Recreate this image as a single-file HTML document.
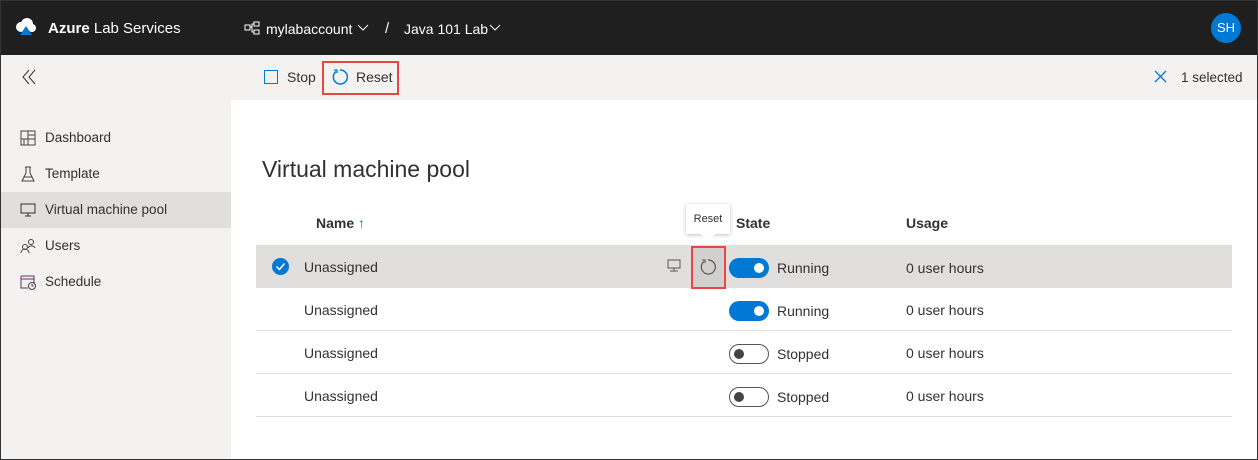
<!DOCTYPE html>
<html><head><style>
*{margin:0;padding:0;box-sizing:border-box}
body{width:1258px;height:460px;overflow:hidden;font-family:"Liberation Sans",sans-serif;background:#fff;position:relative;color:#323130}
.frame{position:absolute;inset:0;border:1px solid #333;pointer-events:none;z-index:10}
.hdr{position:absolute;left:0;top:0;width:1258px;height:55px;background:#1f1f1f;color:#fff;font-size:14px}
.tb{position:absolute;left:0;top:55px;width:1258px;height:45px;background:#f3f2f1;font-size:14px}
.side{position:absolute;left:0;top:100px;width:231px;height:360px;background:#f3f2f1;font-size:13.5px}
.nav{position:absolute;left:0;width:231px;height:36px;line-height:36px;padding-left:45px}
.nav svg{position:absolute;left:20px;top:10px}
.a{position:absolute;white-space:nowrap}
.row{position:absolute;left:256px;width:976px;height:43px;border-bottom:1px solid #e1dfdd;font-size:14px}
.row span{position:absolute;top:14px}
.tog{position:absolute;left:473px;top:13px;width:40px;height:20px;border-radius:10px}
.on{background:#0078d4}.on::after{content:"";position:absolute;right:5px;top:5px;width:10px;height:10px;border-radius:50%;background:#fff}
.off{border:1px solid #555;background:#fff}.off::after{content:"";position:absolute;left:4px;top:4px;width:10px;height:10px;border-radius:50%;background:#444}
</style></head><body>
<div class="hdr">
<svg class="a" style="left:15px;top:18px" width="22" height="18" viewBox="0 0 22 18"><circle cx="6" cy="9" r="5" fill="#fff"/><circle cx="12" cy="6" r="6" fill="#fff"/><circle cx="17" cy="10" r="4" fill="#fff"/><path d="M11 8 L17 17 H5Z" fill="#0078d4"/></svg>
<div class="a" style="left:48px;top:20px;font-size:15px"><b>Azure</b> Lab Services</div>
<svg class="a" style="left:244px;top:21px" width="16" height="14" viewBox="0 0 16 14" fill="none" stroke="#fff"><rect x="1" y="4" width="5" height="5"/><rect x="10" y="1" width="5" height="4"/><rect x="10" y="9" width="5" height="4"/><path d="M6 6h2v-3h2M8 6v5h2"/></svg>
<div class="a" style="left:266px;top:21px">mylabaccount</div>
<svg class="a" style="left:357px;top:24px" width="12" height="8"><path d="M1 1l5 5 5-5" stroke="#fff" fill="none"/></svg>
<div class="a" style="left:385px;top:20px;font-size:15px">/</div>
<div class="a" style="left:404px;top:21px">Java 101 Lab</div>
<svg class="a" style="left:489px;top:24px" width="12" height="8"><path d="M1 1l5 5 5-5" stroke="#fff" fill="none"/></svg>
<div class="a" style="left:1211px;top:13px;width:30px;height:30px;border-radius:50%;background:#0078d4;text-align:center;line-height:30px;font-size:13px">SH</div>
</div>
<div class="tb">
<svg class="a" style="left:21px;top:14px" width="16" height="16"><path d="M8 1L2 8l6 7M14 1L8 8l6 7" stroke="#333" fill="none"/></svg>
<div class="a" style="left:264px;top:15px;width:14px;height:14px;border:1.5px solid #0078d4"></div>
<div class="a" style="left:287px;top:14px">Stop</div>
<div class="a" style="left:322px;top:6px;width:77px;height:34px;border:2px solid #e84545"></div>
<svg class="a" style="left:331px;top:13px" width="18" height="18" viewBox="0 0 18 18"><path d="M5 3.5A7 7 0 1 0 9 2" stroke="#0078d4" stroke-width="1.5" fill="none"/><path d="M3 2h3v3" stroke="#0078d4" stroke-width="1.3" fill="none"/></svg>
<div class="a" style="left:356px;top:14px">Reset</div>
<svg class="a" style="left:1154px;top:15px" width="13" height="13"><path d="M1 1l11 11M12 1L1 12" stroke="#0078d4" stroke-width="1.3"/></svg>
<div class="a" style="left:1181px;top:15px;font-size:13.5px">1 selected</div>
</div>
<div class="side">
<div class="nav" style="top:20px"><svg width="16" height="16"><path d="M1 1h14v14H1zM1 9h14M8 1v14M8 5h7M4 9v6" stroke="#444" fill="none"/></svg>Dashboard</div>
<div class="nav" style="top:56px"><svg width="16" height="16"><path d="M5 1h6M6 1v6L2 15h12L10 7V1M4 11h8" stroke="#444" fill="none"/></svg>Template</div>
<div class="nav" style="top:92px;background:#e1dfdd"><svg width="16" height="16"><path d="M1 2h14v9H1zM8 11v3M5 14h6" stroke="#333" fill="none"/></svg>Virtual machine pool</div>
<div class="nav" style="top:128px"><svg width="16" height="16"><circle cx="5" cy="9" r="2.5" stroke="#444" fill="none"/><circle cx="11" cy="4" r="2.5" stroke="#444" fill="none"/><path d="M1 15a4 4 0 0 1 8 0M8 10a4 4 0 0 1 7 0" stroke="#444" fill="none"/></svg>Users</div>
<div class="nav" style="top:164px"><svg width="16" height="16"><path d="M1 2h13v7M1 2v12h7M1 5h13" stroke="#6b2c6b" fill="none"/><circle cx="12" cy="12" r="3.5" stroke="#444" fill="none"/><path d="M12 10v2h1.5" stroke="#444" fill="none"/></svg>Schedule</div>
</div>
<div class="a" style="left:262px;top:156px;font-size:23px">Virtual machine pool</div>
<div class="a" style="left:316px;top:215px;font-size:14px;font-weight:bold">Name <span style="color:#0078d4;font-weight:normal">↑</span></div>
<div class="a" style="left:736px;top:215px;font-size:14px;font-weight:bold">State</div>
<div class="a" style="left:906px;top:215px;font-size:14px;font-weight:bold">Usage</div>
<div class="row" style="top:245px;background:#e1dfdd">
<div class="a" style="left:16px;top:13px;width:17px;height:17px;border-radius:50%;background:#0078d4"><svg width="17" height="17"><path d="M4.5 8.5l3 3 5-6" stroke="#fff" stroke-width="1.5" fill="none"/></svg></div>
<span style="left:48px">Unassigned</span>
<svg class="a" style="left:411px;top:14px" width="14" height="14"><path d="M1 1h12v8H1zM7 9v3M3 12h8" stroke="#555" fill="none"/></svg>
<div class="a" style="left:435px;top:1px;width:35px;height:43px;border:2px solid #e84545;background:#d2d0ce"></div>
<svg class="a" style="left:442px;top:12px" width="20" height="20" viewBox="0 0 20 20"><path d="M6 4.5A7 7 0 1 0 10 3" stroke="#555" stroke-width="1.2" fill="none"/><path d="M4 3h3v3" stroke="#555" stroke-width="1.1" fill="none"/></svg>
<div class="tog on"></div><span style="left:521px;top:15px">Running</span><span style="left:650px;top:15px">0 user hours</span></div>
<div class="row" style="top:288px"><span style="left:48px">Unassigned</span><div class="tog on"></div><span style="left:521px;top:15px">Running</span><span style="left:650px">0 user hours</span></div>
<div class="row" style="top:331px"><span style="left:48px">Unassigned</span><div class="tog off"></div><span style="left:521px;top:15px">Stopped</span><span style="left:650px">0 user hours</span></div>
<div class="row" style="top:374px"><span style="left:48px">Unassigned</span><div class="tog off"></div><span style="left:521px;top:15px">Stopped</span><span style="left:650px">0 user hours</span></div>
<div class="a" style="left:686px;top:204px;width:44px;height:30px;background:#fff;box-shadow:0 1px 4px rgba(0,0,0,.25);font-size:11px;text-align:center;line-height:30px">Reset</div>
<div class="a" style="left:703px;top:229px;width:10px;height:10px;background:#fff;transform:rotate(45deg)"></div>
<div class="frame"></div>
</body></html>
